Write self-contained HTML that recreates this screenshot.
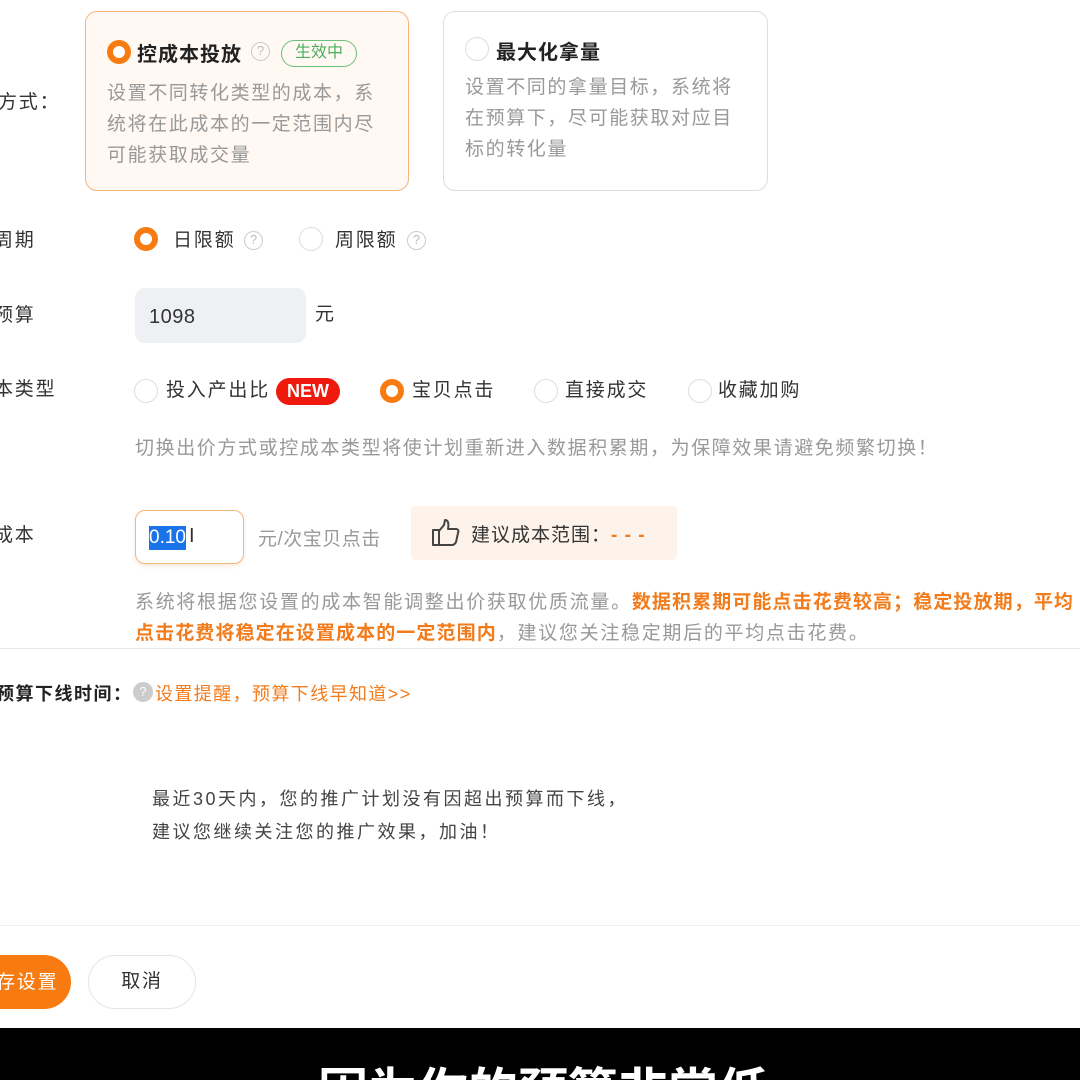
<!DOCTYPE html>
<html><head><meta charset="utf-8"><style>
*{margin:0;padding:0;box-sizing:border-box}
body{width:1080px;height:1080px;overflow:hidden;background:#fff;position:relative;font-family:"Liberation Sans","Noto Sans CJK SC",sans-serif;color:#333;letter-spacing:1.8px}
.a{position:absolute;white-space:nowrap}
.r{position:absolute;width:24px;height:24px;border-radius:50%;border:1.5px solid #ddd;background:#fff}
.ro{position:absolute;width:24px;height:24px;border-radius:50%;border:6px solid #f77b10;background:#fff}
.q{position:absolute;width:19px;height:19px;border-radius:50%;border:1.5px solid #ccc;color:#bbb;font-size:13px;text-align:center;line-height:16px;letter-spacing:0}
.t{font-size:19px;color:#333;line-height:24px}
.g{font-size:19px;color:#999}
.o{color:#f27c1c}
</style></head><body>
<div class="a" style="left:85px;top:11px;width:324px;height:180px;border:1.5px solid #f2b57e;border-radius:12px;background:#fff8f3"></div>
<div class="ro" style="left:107px;top:40px"></div>
<div class="a" style="left:137px;top:38px;font-size:20px;font-weight:bold;color:#222;letter-spacing:1px">控成本投放</div>
<div class="q" style="left:251px;top:42px">?</div>
<div class="a" style="left:281px;top:40px;width:76px;height:27px;border:1.5px solid #6cc07a;border-radius:14px;color:#4caf5e;font-size:16px;text-align:center;line-height:24px;letter-spacing:0">生效中</div>
<div class="a g" style="left:107px;top:78px;line-height:31px;letter-spacing:1.6px">设置不同转化类型的成本，系<br>统将在此成本的一定范围内尽<br>可能获取成交量</div>
<div class="a" style="left:443px;top:11px;width:325px;height:180px;border:1.5px solid #ddd;border-radius:12px"></div>
<div class="r" style="left:465px;top:37px"></div>
<div class="a" style="left:496px;top:36px;font-size:20px;font-weight:bold;color:#222;letter-spacing:1px">最大化拿量</div>
<div class="a g" style="left:465px;top:72px;line-height:31px;letter-spacing:1.6px">设置不同的拿量目标，系统将<br>在预算下，尽可能获取对应目<br>标的转化量</div>
<div class="a t" style="left:-2px;top:91px">方式：</div>

<div class="a t" style="left:-6px;top:229px">周期</div>
<div class="ro" style="left:134px;top:227px"></div>
<div class="a t" style="left:173px;top:229px">日限额</div>
<div class="q" style="left:244px;top:231px">?</div>
<div class="r" style="left:299px;top:227px"></div>
<div class="a t" style="left:335px;top:229px">周限额</div>
<div class="q" style="left:407px;top:231px">?</div>

<div class="a t" style="left:-6px;top:304px">预算</div>
<div class="a" style="left:135px;top:288px;width:171px;height:55px;background:#eef0f4;border-radius:10px"></div>
<div class="a t" style="left:149px;top:305px;font-size:20px;letter-spacing:0.5px">1098</div>
<div class="a t" style="left:315px;top:303px">元</div>

<div class="a t" style="left:-6px;top:378px">本类型</div>
<div class="r" style="left:134px;top:379px"></div>
<div class="a t" style="left:166px;top:379px">投入产出比</div>
<div class="a" style="left:276px;top:378px;width:64px;height:27px;background:#f0190e;border-radius:14px;color:#fff;font-size:18px;font-weight:bold;text-align:center;line-height:27px;letter-spacing:0">NEW</div>
<div class="ro" style="left:380px;top:379px"></div>
<div class="a t" style="left:412px;top:379px">宝贝点击</div>
<div class="r" style="left:534px;top:379px"></div>
<div class="a t" style="left:565px;top:379px">直接成交</div>
<div class="r" style="left:688px;top:379px"></div>
<div class="a t" style="left:718px;top:379px">收藏加购</div>
<div class="a g" style="left:135px;top:433px;font-size:19px;letter-spacing:1.6px">切换出价方式或控成本类型将使计划重新进入数据积累期，为保障效果请避免频繁切换！</div>

<div class="a t" style="left:-6px;top:524px">成本</div>
<div class="a" style="left:135px;top:510px;width:109px;height:54px;border:1.5px solid #f2b57e;border-radius:10px;box-shadow:0 2px 4px rgba(242,140,60,.2)"></div>
<div class="a" style="left:149px;top:526px;background:#1a73e8;color:#fff;font-size:19px;line-height:24px;letter-spacing:0">0.10</div>
<div class="a" style="left:189px;top:525px;font-size:20px;color:#333">I</div>
<div class="a g" style="left:258px;top:524px;letter-spacing:0.5px">元/次宝贝点击</div>
<div class="a" style="left:411px;top:506px;width:266px;height:54px;background:#fdf3ea;border-radius:4px"></div>
<svg class="a" style="left:430px;top:518px" width="30" height="30" viewBox="0 0 30 30"><path d="M3 12h6v15H3z M9 13l5-6 1-5c3 0 4 3 3 9h8c2 0 3 2 2 4l-2 9c-1 2-2 3-4 3H9" fill="none" stroke="#444" stroke-width="2" stroke-linejoin="round"/></svg>
<div class="a t" style="left:471px;top:524px;letter-spacing:1px">建议成本范围：<span class="o" style="font-weight:bold">- - -</span></div>

<div class="a g" style="left:135px;top:587px;font-size:19px;line-height:31px;letter-spacing:1.7px">系统将根据您设置的成本智能调整出价获取优质流量。<span class="o" style="font-weight:bold;letter-spacing:1.1px">数据积累期可能点击花费较高；稳定投放期，平均</span><br><span class="o" style="font-weight:bold;letter-spacing:1.1px">点击花费将稳定在设置成本的一定范围内</span>，建议您关注稳定期后的平均点击花费。</div>
<div class="a" style="left:0;top:648px;width:1080px;height:1px;background:#e8e8e8"></div>

<div class="a" style="left:-4px;top:680px;font-size:18px;font-weight:bold;color:#222;letter-spacing:1.5px">预算下线时间：</div>
<div class="a" style="left:133px;top:682px;width:20px;height:20px;border-radius:50%;background:#ccc;color:#fff;font-size:13px;text-align:center;line-height:20px;letter-spacing:0">?</div>
<div class="a o" style="left:155px;top:680px;font-size:18px;letter-spacing:1.4px">设置提醒，预算下线早知道&gt;&gt;</div>

<div class="a t" style="left:152px;top:783px;font-size:18px;line-height:33px;color:#444;letter-spacing:2.5px">最近30天内，您的推广计划没有因超出预算而下线，<br>建议您继续关注您的推广效果，加油！</div>

<div class="a" style="left:0;top:925px;width:1080px;height:1px;background:#eee"></div>
<div class="a" style="left:-40px;top:955px;width:111px;height:54px;background:#f77b10;border-radius:27px"></div>
<div class="a" style="left:-4px;top:971px;color:#fff;font-size:19px;line-height:24px">存设置</div>
<div class="a" style="left:88px;top:955px;width:108px;height:54px;border:1.5px solid #e5e5e5;border-radius:27px;text-align:center;line-height:52px;font-size:19px;color:#333">取消</div>

<div class="a" style="left:0;top:1028px;width:1080px;height:52px;background:#000;overflow:hidden">
<div class="a" style="left:318px;top:36px;color:#fff;font-size:50px;line-height:56px;font-weight:bold;letter-spacing:0">因为你的预算非常低</div>
</div>
</body></html>
